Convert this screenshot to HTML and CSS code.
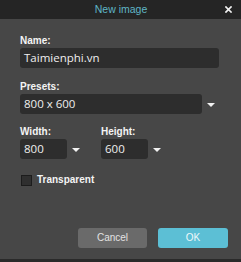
FILE: index.html
```html
<!DOCTYPE html>
<html>
<head>
<meta charset="utf-8">
<link rel="stylesheet" href="styles.css">
</head>
<body>
<div class="dialog">
  <div class="titlebar">
    <span></span>
    <span class="title">New image</span>
    <span class="close">
      <svg width="7" height="7" viewBox="0 0 7 7"><path d="M1 1 L6 6 M6 1 L1 6" stroke="#f2f2f2" stroke-width="1.7" stroke-linecap="square"/></svg>
    </span>
  </div>
  <div class="content">
    <div class="field">
      <div class="label">Name:</div>
      <div class="input input-name">Taimienphi.vn</div>
    </div>
    <div class="field">
      <div class="label">Presets:</div>
      <div class="select">
        <div class="input input-preset">800 x 600</div>
        <span class="arrow"></span>
      </div>
    </div>
    <div class="field row">
      <div class="sub">
        <div class="label">Width:</div>
        <div class="select">
          <div class="input input-small">800</div>
          <span class="arrow"></span>
        </div>
      </div>
      <div class="sub">
        <div class="label">Height:</div>
        <div class="select">
          <div class="input input-small">600</div>
          <span class="arrow"></span>
        </div>
      </div>
    </div>
    <div class="check">
      <span class="box"></span>
      <span class="check-label">Transparent</span>
    </div>
  </div>
  <div class="footer">
    <div class="btn btn-cancel">Cancel</div>
    <div class="btn btn-ok">OK</div>
  </div>
</div>
</body>
</html>
```

FILE: styles.css
```css
html, body {
  margin: 0;
  padding: 0;
}
body {
  background: #2a2a2a;
  width: 241px;
  height: 262px;
  overflow: hidden;
  font-family: "Liberation Sans", Arial, sans-serif;
}
.dialog {
  width: 241px;
  height: 259px;
  background: #474747;
  display: flex;
  flex-direction: column;
}
.titlebar {
  height: 19px;
  background: #252525;
  display: grid;
  grid-template-columns: 1fr auto 1fr;
  align-items: center;
}
.title {
  color: #5fb6c6;
  font-size: 10.5px;
  line-height: 19px;
  padding-left: 1px;
}
.close {
  justify-self: end;
  margin-right: 9px;
  display: flex;
  margin-top: 0;
}
.content {
  padding: 16px 0 0 20px;
  display: flex;
  flex-direction: column;
}
.field {
  margin-bottom: 13px;
}
.field + .field {
  margin-bottom: 12px;
}
.label {
  color: #f4f4f4;
  font-weight: bold;
  font-size: 10px;
  line-height: 12px;
  margin-bottom: 1px;
}
.input {
  background: #2d2d2d;
  border-radius: 3px;
  height: 20px;
  line-height: 20px;
  padding-left: 4px;
  box-sizing: border-box;
  color: #efefef;
  font-family: "Open Sans", "Liberation Sans", sans-serif;
  font-size: 11.5px;
}
.input-name {
  width: 199px;
}
.input-preset {
  width: 182px;
}
.input-small {
  width: 47px;
}
.select {
  display: flex;
  align-items: center;
  gap: 5px;
}
.arrow {
  width: 0;
  height: 0;
  border-left: 4px solid transparent;
  border-right: 4px solid transparent;
  border-top: 4px solid #f2f2f2;
  margin-top: 1px;
}
.row {
  display: flex;
  gap: 21px;
}
.check {
  display: flex;
  align-items: center;
  gap: 5px;
  margin-top: 3px;
}
.box {
  width: 9px;
  height: 9px;
  background: #2f2f2f;
  border: 1px solid #1c1c1c;
  margin-left: 1px;
}
.check-label {
  color: #f4f4f4;
  font-weight: bold;
  font-size: 10px;
  line-height: 12px;
}
.footer {
  margin-top: auto;
  display: flex;
  justify-content: flex-end;
  gap: 11px;
  padding: 0 13px 11px 0;
}
.btn {
  height: 20px;
  line-height: 20px;
  border-radius: 3px;
  text-align: center;
  font-size: 10px;
}
.btn-cancel {
  width: 69px;
  background: #6a6a6a;
  color: #e2e2e2;
}
.btn-ok {
  width: 70px;
  background: #5cbfd5;
  color: #eef8fa;
}
```
